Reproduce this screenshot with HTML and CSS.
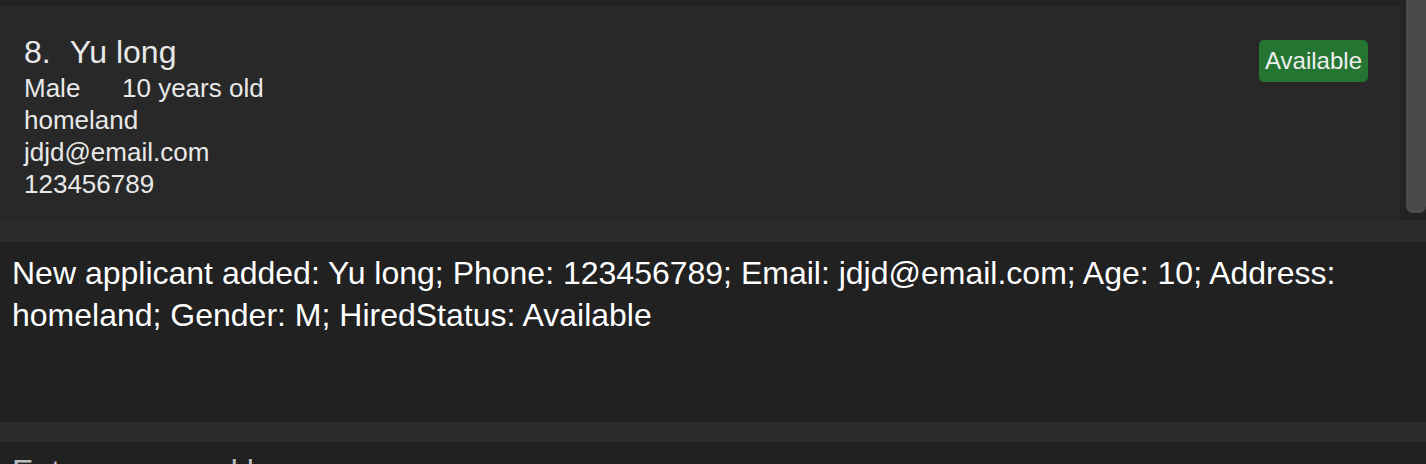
FILE: index.html
```html
<!DOCTYPE html>
<html lang="en">
<head>
<meta charset="utf-8">
<title>Applicant list</title>
<link rel="stylesheet" href="styles.css">
</head>
<body>
<div class="app">
  <div class="list">
    <div class="cards">
      <div class="card">
        <div class="info">
          <div class="name"><span class="index">8.</span><span>Yu long</span></div>
          <div class="row"><span class="gender">Male</span><span>10 years old</span></div>
          <div class="row">homeland</div>
          <div class="row">jdjd@email.com</div>
          <div class="row">123456789</div>
        </div>
        <div class="badge">Available</div>
      </div>
    </div>
    <div class="scrollbar"><div class="thumb"></div></div>
  </div>
  <div class="sep sep-a"></div>
  <div class="result">New applicant added: Yu long; Phone: 123456789; Email: jdjd@email.com; Age: 10; Address: homeland; Gender: M; HiredStatus: Available</div>
  <div class="sep sep-b"></div>
  <div class="command">Enter command here...</div>
</div>
</body>
</html>
```
FILE: styles.css
```css
html, body {
  margin: 0;
  padding: 0;
  background: #212121;
  overflow: hidden;
}
.app {
  width: 1426px;
  height: 464px;
  display: flex;
  flex-direction: column;
  font-family: "Liberation Sans", Arial, sans-serif;
  overflow: hidden;
}
.list {
  height: 220px;
  flex: none;
  display: flex;
  background: #232323;
}
.cards {
  flex: 1;
  padding-top: 6px;
  display: flex;
  flex-direction: column;
}
.card {
  flex: 1;
  background: #282828;
  display: flex;
  justify-content: space-between;
  align-items: flex-start;
  padding: 27px 32px 0 24px;
  color: #e8e8e8;
}
.info {
  display: flex;
  flex-direction: column;
}
.name {
  font-size: 32px;
  line-height: 39px;
  display: flex;
  gap: 19px;
}
.row {
  font-size: 26px;
  line-height: 32px;
  display: flex;
}
.gender {
  width: 98px;
}
.badge {
  margin-top: 7px;
  background: #257532;
  color: #eeeeee;
  font-size: 24px;
  line-height: 28px;
  padding: 7px 6px;
  border-radius: 5px;
}
.scrollbar {
  width: 20px;
  padding-left: 6px;
  flex: none;
}
.thumb {
  height: 213px;
  background: #4a4a4a;
  border-radius: 0 0 7px 7px;
}
.sep {
  flex: none;
  background: #2b2b2b;
}
.sep-a { height: 22px; }
.sep-b { height: 20px; }
.result {
  height: 170px;
  flex: none;
  padding: 10px 12px 0 12px;
  color: #ffffff;
  font-size: 32px;
  line-height: 42px;
  background: #212121;
}
.command {
  flex: 1;
  padding: 8px 12px 0 12px;
  color: #bdbdbd;
  font-size: 32px;
  line-height: 42px;
  background: #212121;
}
```
